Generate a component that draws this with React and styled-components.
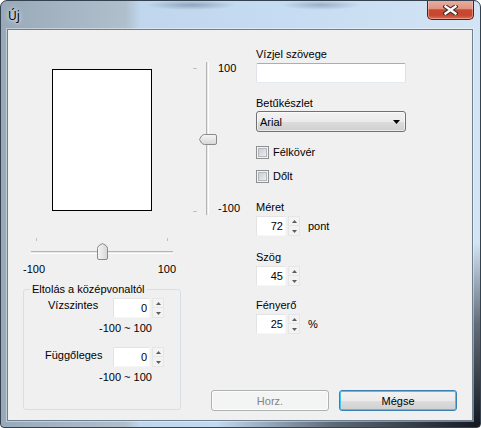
import styled, { createGlobalStyle } from 'styled-components';

const GlobalStyle = createGlobalStyle`
  html, body {
    margin: 0;
    padding: 0;
    background: #fff;
  }
  body {
    font-family: "Liberation Sans", Arial, sans-serif;
    font-size: 11px;
    color: #000;
  }
`;

const Window = styled.div`
  width: 481px;
  height: 428px;
  box-sizing: border-box;
  display: flex;
  flex-direction: column;
  border: 1px solid #34414e;
  border-radius: 7px 7px 4px 4px;
  padding: 0 7px 6px 6px;
  overflow: hidden;
  background:
    radial-gradient(ellipse 330px 230px at 100% 100%, rgba(8, 12, 20, 0.95), rgba(8, 12, 20, 0.55) 45%, transparent 80%),
    radial-gradient(ellipse 45px 5px at 190px 4px, rgba(50, 70, 100, 0.35), transparent),
    radial-gradient(ellipse 40px 5px at 320px 4px, rgba(50, 70, 100, 0.3), transparent),
    linear-gradient(90deg, #98a9b9 0%, #b0bfcc 26%, #bfd6ec 29%, #c6dcf2 60%, #d3e4f4 100%);
`;

const TitleBar = styled.div`
  height: 28px;
  flex-shrink: 0;
  display: flex;
  justify-content: space-between;
  align-items: center;
  padding-left: 1px;
`;

const Title = styled.div`
  font-family: "Noto Sans", "DejaVu Sans", sans-serif;
  font-size: 12px;
  line-height: 14px;
  margin-top: 1px;
  text-shadow: 0 0 6px rgba(255, 255, 255, 0.9), 0 0 3px rgba(255, 255, 255, 0.8);
`;

const CloseButton = styled.div`
  align-self: flex-start;
  width: 47px;
  height: 20px;
  margin: -1px -1px 0 0;
  box-sizing: border-box;
  border: 1px solid #52221a;
  border-top: none;
  border-radius: 0 0 5px 5px;
  display: flex;
  align-items: center;
  justify-content: center;
  box-shadow: inset 0 0 0 1px rgba(255, 210, 200, 0.45);
  background: linear-gradient(#e9b0a2 0%, #df9482 45%, #c8482f 52%, #c64631 80%, #dc6f55 100%);
`;

const Client = styled.div`
  flex: 1;
  display: flex;
  background: #f0f0f0;
  border: 1px solid #6e7f90;
  box-shadow: 0 0 0 1px rgba(255, 255, 255, 0.4);
`;

const LeftCol = styled.div`
  width: 184px;
  flex-shrink: 0;
  display: flex;
  flex-direction: column;
`;

const RightCol = styled.div`
  flex: 1;
  display: flex;
  flex-direction: column;
`;

const TopRow = styled.div`
  display: flex;
  align-items: flex-start;
`;

const Preview = styled.div`
  width: 100px;
  height: 142px;
  box-sizing: border-box;
  margin: 39px 0 0 44px;
  background: #fff;
  border: 1px solid #000;
`;

/* vertical trackbar */
const VSlider = styled.div`
  width: 64px;
  height: 154px;
  margin-top: 32px;
  display: flex;
`;

const VTicks = styled.div`
  width: 4px;
  margin-left: 1px;
  padding: 6px 0 4px;
  display: flex;
  flex-direction: column;
  justify-content: space-between;
`;

const HTickMark = styled.div`
  width: 4px;
  height: 1px;
  background: #c2c2c2;
`;

const VTrackArea = styled.div`
  position: relative;
  width: 21px;
`;

const VTrack = styled.div`
  width: 1px;
  height: 153px;
  margin-left: 9px;
  background: #e9e9e9;
  border-left: 1px solid #b4b4b4;
  border-right: 1px solid #fdfdfd;
`;

const VThumb = styled.svg`
  position: absolute;
  left: 2px;
  top: 72px;
`;

const VLabels = styled.div`
  height: 153px;
  display: flex;
  flex-direction: column;
  justify-content: space-between;
  line-height: 13px;
`;

/* horizontal trackbar */
const HSlider = styled.div`
  position: relative;
  width: 142px;
  height: 24px;
  margin: 26px 0 0 23px;
`;

const HTicks = styled.div`
  display: flex;
  justify-content: space-between;
  padding: 1px 5px 0;
  height: 3px;
`;

const VTickMark = styled.div`
  width: 1px;
  height: 3px;
  background: #c2c2c2;
`;

const HTrack = styled.div`
  height: 1px;
  margin-top: 10px;
  background: #e9e9e9;
  border-top: 1px solid #b4b4b4;
  border-bottom: 1px solid #fdfdfd;
`;

const HThumb = styled.svg`
  position: absolute;
  left: 66px;
  top: 6px;
`;

const HLabels = styled.div`
  width: 153px;
  margin: 2px 0 0 15px;
  display: flex;
  justify-content: space-between;
  line-height: 13px;
`;

/* group box */
const Group = styled.fieldset`
  width: 158px;
  box-sizing: border-box;
  margin: 7px 0 0 15px;
  padding: 0 0 25px 0;
  border: 1px solid #d5dfe5;
  border-radius: 3px;
  min-inline-size: 0;
`;

const Legend = styled.legend`
  padding: 0 2px;
  margin-left: 6px;
  line-height: 13px;
`;

const GroupRow = styled.div`
  display: flex;
  align-items: flex-start;
  margin-top: ${(p) => p.$mt}px;
  padding-left: ${(p) => p.$pl}px;
`;

const RowLabel = styled.div`
  width: ${(p) => p.$w}px;
  line-height: 13px;
  margin-top: ${(p) => p.$mt}px;
`;

const Range = styled.div`
  line-height: 13px;
  margin: 4px 0 0 75px;
`;

/* right side fields */
const Fields = styled.div`
  display: flex;
  flex-direction: column;
  align-items: flex-start;
`;

const Label = styled.div`
  line-height: 13px;
  margin-top: ${(p) => p.$mt}px;
`;

const TextBox = styled.input`
  width: 150px;
  height: 20px;
  box-sizing: border-box;
  margin: 2px 0 0;
  padding: 0 3px;
  font: inherit;
  background: #fff;
  border: 1px solid;
  border-color: #abadb3 #dbdfe6 #e3e9ef #e2e3ea;
  border-radius: 2px;
  outline: none;
`;

const Combo = styled.div`
  width: 150px;
  height: 21px;
  box-sizing: border-box;
  margin-top: 1px;
  padding: 0 5px 0 3px;
  display: flex;
  align-items: center;
  justify-content: space-between;
  border: 1px solid #707070;
  border-radius: 3px;
  background: linear-gradient(#f2f2f2 0%, #ebebeb 50%, #dddddd 51%, #cfcfcf 100%);
  box-shadow: inset 0 0 0 1px rgba(255, 255, 255, 0.6);
`;

const CheckRow = styled.div`
  display: flex;
  align-items: center;
  gap: 4px;
  height: 13px;
  line-height: 13px;
  margin-top: ${(p) => p.$mt}px;
`;

const CheckBox = styled.div`
  width: 13px;
  height: 13px;
  box-sizing: border-box;
  padding: 1px;
  border: 1px solid #8e8f8f;
  background: #f4f4f4;

  &::after {
    content: "";
    display: block;
    width: 9px;
    height: 9px;
    border: 1px solid #b4b8bd;
    box-sizing: border-box;
    background: linear-gradient(135deg, #c9cdd3, #eceef0);
  }
`;

const Spin = styled.div`
  display: flex;
  align-items: stretch;
  height: 20px;
  margin-top: ${(p) => p.$mt || 0}px;
`;

const SpinInput = styled.input`
  width: ${(p) => p.$w}px;
  box-sizing: border-box;
  margin: 0;
  padding: 0 2px 0 0;
  font: inherit;
  text-align: right;
  background: #fff;
  border: 1px solid;
  border-color: #e3e3e3 #f7f7f7 #f7f7f7 #e3e3e3;
  outline: none;
`;

const SpinButtons = styled.div`
  width: 12px;
  margin-left: 2px;
  display: flex;
  flex-direction: column;
`;

const SpinHalf = styled.div`
  flex: 1;
  display: flex;
  align-items: center;
  justify-content: center;
  background: #f3f3f3;
  border: 1px solid #e6e6e6;
  border-top-color: ${(p) => (p.$down ? '#f3f3f3' : '#e6e6e6')};
`;

const Unit = styled.div`
  align-self: center;
  margin-left: 8px;
  line-height: 13px;
`;

const ButtonRow = styled.div`
  margin-top: auto;
  display: flex;
  justify-content: flex-end;
  gap: 10px;
  padding: 0 15px 9px 0;
`;

const Button = styled.button`
  width: 118px;
  height: 21px;
  box-sizing: border-box;
  padding: 0;
  font: inherit;
  border-radius: 3px;
  border: 1px solid ${(p) => (p.$focused ? '#3c7fb1' : '#707070')};
  color: #000;
  background: linear-gradient(#f2f2f2 0%, #ebebeb 50%, #dddddd 51%, #cfcfcf 100%);
  box-shadow: inset 0 0 0 1px ${(p) => (p.$focused ? '#48c4f2' : 'rgba(255,255,255,0.7)')};

  &:disabled {
    color: #838383;
    border-color: #adb2b5;
    background: #f4f4f4;
    box-shadow: inset 0 0 0 1px #fcfcfc;
  }
`;

function Arrow({ down }) {
  return (
    <svg width="5" height="3" viewBox="0 0 5 3">
      <path d={down ? 'M0 0H5L2.5 3Z' : 'M0 3H5L2.5 0Z'} fill="#5c5c5c" />
    </svg>
  );
}

function SpinBox({ value, w, unit, mt }) {
  return (
    <Spin $mt={mt}>
      <SpinInput $w={w} defaultValue={value} />
      <SpinButtons>
        <SpinHalf>
          <Arrow />
        </SpinHalf>
        <SpinHalf $down>
          <Arrow down />
        </SpinHalf>
      </SpinButtons>
      {unit && <Unit>{unit}</Unit>}
    </Spin>
  );
}

export default function App() {
  return (
    <>
      <GlobalStyle />
      <Window>
        <TitleBar>
          <Title>Új</Title>
          <CloseButton>
            <svg width="15" height="10" viewBox="0 0 15 10">
              <path d="M2.5 1.5L12.5 8.5M12.5 1.5L2.5 8.5" stroke="#3b2a27" strokeWidth="4.4" strokeLinecap="square" />
              <path d="M2.5 1.5L12.5 8.5M12.5 1.5L2.5 8.5" stroke="#fff" strokeWidth="2.4" strokeLinecap="square" />
            </svg>
          </CloseButton>
        </TitleBar>
        <Client>
          <LeftCol>
            <Preview />
            <HSlider>
              <HTicks>
                <VTickMark />
                <VTickMark />
              </HTicks>
              <HTrack />
              <HThumb width="11" height="17" viewBox="0 0 11 17">
                <defs>
                  <linearGradient id="ht" x1="0" y1="0" x2="1" y2="0">
                    <stop offset="0" stopColor="#f6f6f6" />
                    <stop offset="1" stopColor="#d6d6d6" />
                  </linearGradient>
                </defs>
                <path d="M0.5 5.5Q0.5 4 2 2.5L5.5 0.5L9 2.5Q10.5 4 10.5 5.5V15Q10.5 16.5 9 16.5H2Q0.5 16.5 0.5 15Z" fill="url(#ht)" stroke="#8a8a8a" />
              </HThumb>
            </HSlider>
            <HLabels>
              <span>-100</span>
              <span>100</span>
            </HLabels>
            <Group>
              <Legend>Eltolás a középvonaltól</Legend>
              <GroupRow $mt={2} $pl={24}>
                <RowLabel $w={65} $mt={1}>Vízszintes</RowLabel>
                <SpinBox value="0" w={37} />
              </GroupRow>
              <Range>-100 ~ 100</Range>
              <GroupRow $mt={12} $pl={21}>
                <RowLabel $w={68} $mt={2}>Függőleges</RowLabel>
                <SpinBox value="0" w={37} />
              </GroupRow>
              <Range>-100 ~ 100</Range>
            </Group>
          </LeftCol>
          <RightCol>
            <TopRow>
              <VSlider>
                <VTicks>
                  <HTickMark />
                  <HTickMark />
                </VTicks>
                <VTrackArea>
                  <VTrack />
                  <VThumb width="18" height="11" viewBox="0 0 18 11">
                    <defs>
                      <linearGradient id="vt" x1="0" y1="0" x2="0" y2="1">
                        <stop offset="0" stopColor="#f6f6f6" />
                        <stop offset="1" stopColor="#d6d6d6" />
                      </linearGradient>
                    </defs>
                    <path d="M5.5 0.5H16Q17.5 0.5 17.5 2V9Q17.5 10.5 16 10.5H5.5Q4 10.5 2.5 9L0.5 5.5L2.5 2Q4 0.5 5.5 0.5Z" fill="url(#vt)" stroke="#8a8a8a" />
                  </VThumb>
                </VTrackArea>
                <VLabels>
                  <span>100</span>
                  <span>-100</span>
                </VLabels>
              </VSlider>
              <Fields>
                <Label $mt={18}>Vízjel szövege</Label>
                <TextBox defaultValue="" />
                <Label $mt={14}>Betűkészlet</Label>
                <Combo>
                  <span>Arial</span>
                  <svg width="7" height="4" viewBox="0 0 7 4">
                    <path d="M0 0H7L3.5 4Z" fill="#000" />
                  </svg>
                </Combo>
                <CheckRow $mt={14}>
                  <CheckBox />
                  <span>Félkövér</span>
                </CheckRow>
                <CheckRow $mt={11}>
                  <CheckBox />
                  <span>Dőlt</span>
                </CheckRow>
                <Label $mt={18}>Méret</Label>
                <SpinBox value="72" w={30} unit="pont" mt={2} />
                <Label $mt={15}>Szög</Label>
                <SpinBox value="45" w={30} mt={2} />
                <Label $mt={13}>Fényerő</Label>
                <SpinBox value="25" w={30} unit="%" mt={2} />
              </Fields>
            </TopRow>
            <ButtonRow>
              <Button disabled>Horz.</Button>
              <Button $focused>Mégse</Button>
            </ButtonRow>
          </RightCol>
        </Client>
      </Window>
    </>
  );
}
